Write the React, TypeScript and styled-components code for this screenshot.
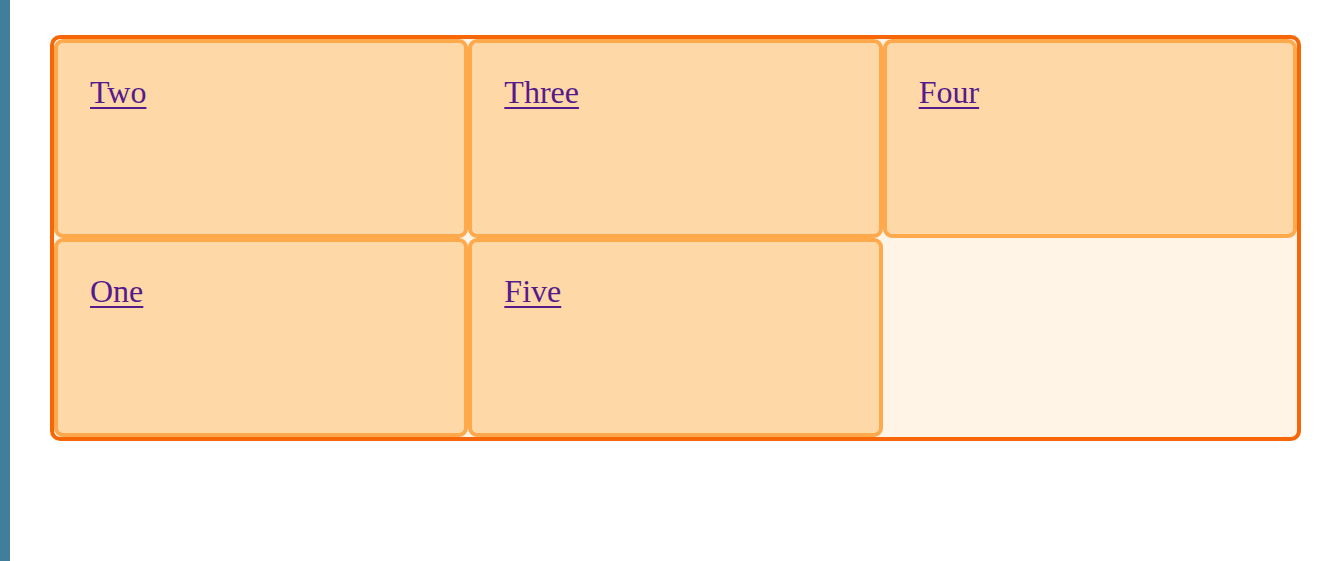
import styled, { createGlobalStyle } from "styled-components";

const GlobalStyle = createGlobalStyle`
  html, body {
    margin: 0;
    padding: 0;
    background: #fff;
  }
  body {
    font-family: "Liberation Serif", "Times New Roman", serif;
  }
`;

const Page = styled.div`
  display: flex;
  min-height: 561px;
`;

const SideBar = styled.div`
  width: 10px;
  flex: none;
  background-color: #3f7f9b;
`;

const Content = styled.main`
  flex: 1;
  padding: 35px 39px 0 40px;
`;

const Wrapper = styled.div`
  display: grid;
  grid-template-columns: repeat(3, 1fr);
  grid-auto-rows: 199px;
  border: 4px solid #f76707;
  border-radius: 10px;
  background-color: #fff4e6;
`;

const Cell = styled.div`
  border: 4px solid #ffa94d;
  border-radius: 9px;
  background-color: #ffd8a8;
  padding: 31px 32px;
  font-size: 32px;
  line-height: 37px;
`;

const CellLink = styled.a`
  color: #551a8b;
  text-decoration: underline;
  text-decoration-thickness: 2px;
  text-underline-offset: 4px;
`;

const items = ["Two", "Three", "Four", "One", "Five"];

export default function App() {
  return (
    <>
      <GlobalStyle />
      <Page>
        <SideBar />
        <Content>
          <Wrapper>
            {items.map((label) => (
              <Cell key={label}>
                <CellLink href="#">{label}</CellLink>
              </Cell>
            ))}
          </Wrapper>
        </Content>
      </Page>
    </>
  );
}
